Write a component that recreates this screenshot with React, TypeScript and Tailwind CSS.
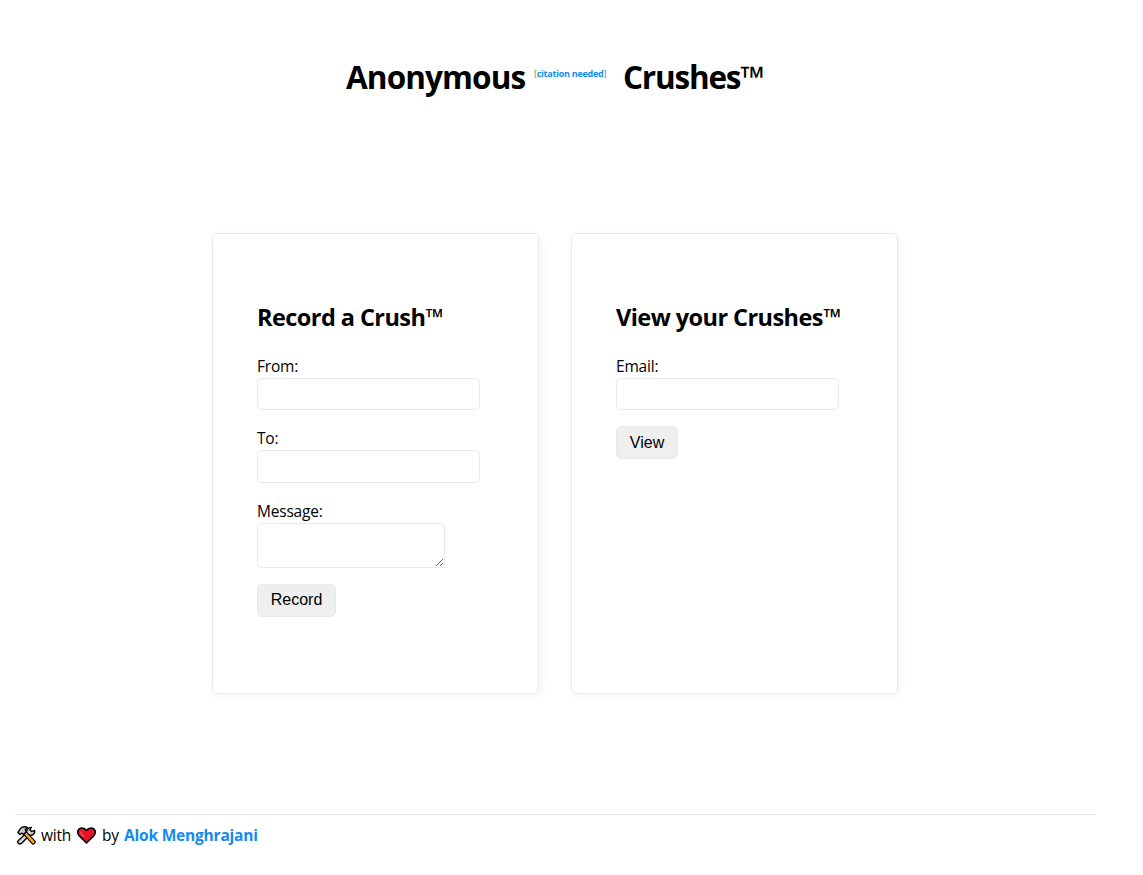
import type { ReactNode } from "react";

function ToolsIcon() {
  return (
    <svg className="h-[19px] w-[19px] shrink-0" viewBox="0 0 19 19" aria-label="tools">
      <path
        d="M1.2 14.8 9.6 6.8C9.2 4 11 1.3 14.4 1.4L12.8 3.8 14.6 5.6 17.6 4.4C18.2 7.8 15.5 9.8 12.4 9.2L4.4 17.4C2.4 18.8-.2 16.8 1.2 14.8Z"
        fill="#d8d8d8"
        stroke="#000"
        strokeWidth="1.4"
        strokeLinejoin="round"
      />
      <path d="M6.2 7.6 8.8 5.4 18 15.2C18.6 17 17 18.5 15.4 17.9Z" fill="#fbab18" stroke="#000" strokeWidth="1.2" strokeLinejoin="round" />
      <path
        d="M.9 6.6 3 3.2C4.6 .8 7.8.4 10.4 1.4L8.2 3.6 9.4 5.6 6.6 8.4 4.9 7 3 8.6Z"
        fill="#cacaca"
        stroke="#000"
        strokeWidth="1.4"
        strokeLinejoin="round"
      />
    </svg>
  );
}

function HeartIcon() {
  return (
    <svg className="h-[19px] w-[19px] shrink-0" viewBox="0 0 19 19" aria-label="love">
      <path
        d="M9.5 17 2.1 9.6C-.9 6 1.4 1.9 4.9 1.9 7 1.9 8.5 2.9 9.5 4.5 10.5 2.9 12 1.9 14.1 1.9 17.6 1.9 19.9 6 16.9 9.6Z"
        fill="#e81224"
        stroke="#000"
        strokeWidth="1.5"
        strokeLinejoin="round"
      />
      <path d="M4 6.2C3.6 7.8 4.6 8.8 6.6 10.6" fill="none" stroke="#f4606c" strokeWidth="1.2" strokeLinecap="round" />
    </svg>
  );
}

function Card({ title, children }: { title: ReactNode; children: ReactNode }) {
  return (
    <section className="h-[461px] w-[327px] rounded-[5px] border border-[#e9e9e9] pt-[66px] pl-11 shadow-[2px_2px_10px_#f4f4f4]">
      <h2 className="flex h-9 items-center text-[23.5px] font-bold tracking-[-0.56px] whitespace-nowrap">{title}</h2>
      <form className="mt-[19px]" onSubmit={(e) => e.preventDefault()}>
        {children}
      </form>
    </section>
  );
}

function Field({ label, className, inputClassName }: { label: string; className: string; inputClassName: string }) {
  return (
    <label className={className}>
      <span className="block h-[23px] leading-[22px]">{label}</span>
      <input className={`block w-[223px] rounded-[5px] border border-[#e9e9e9] px-3 outline-none ${inputClassName}`} />
    </label>
  );
}

function Button({ children, className }: { children: ReactNode; className: string }) {
  return (
    <button
      className={`flex h-[33px] items-center justify-center rounded-[5px] border border-[#e9e9e9] bg-[#efefef] font-['Liberation_Sans',sans-serif] text-base tracking-normal ${className}`}
    >
      {children}
    </button>
  );
}

export default function App() {
  return (
    <div className="flex h-[875px] flex-col bg-white font-['Open_Sans','Noto_Sans',sans-serif] text-[15.5px] tracking-[-0.2px] text-black">
      <header className="flex h-[233px] pt-[53px] pl-[346px]">
        <h1 className="flex h-12 items-center text-[31.5px] font-bold whitespace-nowrap">
          <span className="w-[188px] tracking-[-0.9px]">Anonymous</span>
          <a href="#" className="mb-1.5 w-[89px] text-[9px] leading-3 tracking-[-0.24px] text-[#118bee]">
            <span className="font-normal text-[#777]">[</span>citation needed
            <span className="font-normal text-[#777]">]</span>
          </a>
          <span className="tracking-[-1.2px]">Crushes™</span>
        </h1>
      </header>
      <main className="flex gap-8 pl-[212px]">
        <Card title="Record a Crush™">
          <Field label="From:" className="block h-[72px]" inputClassName="h-8" />
          <Field label="To:" className="block h-[73px]" inputClassName="h-[33px]" />
          <label className="block h-[61px]">
            <span className="block h-[23px] leading-[22px]">Message:</span>
            <textarea className="block h-[45px] w-[188px] resize rounded-[5px] border border-[#e9e9e9] outline-none" />
          </label>
          <Button className="mt-[23px] w-[79px] pb-[2px]">Record</Button>
        </Card>
        <Card title="View your Crushes™">
          <Field label="Email:" className="block h-[71px]" inputClassName="h-8" />
          <Button className="w-[62px]">View</Button>
        </Card>
      </main>
      <footer className="mt-[120px] ml-[15px] flex w-[1080px] items-center border-t border-[#e9e9e9] pt-2 pl-0.5 leading-6">
        <ToolsIcon />
        <span className="ml-[5px] w-9">with</span>
        <HeartIcon />
        <span className="ml-1.5 w-[22px]">by</span>
        <a href="#" className="font-bold text-[#118bee]">Alok Menghrajani</a>
      </footer>
    </div>
  );
}
